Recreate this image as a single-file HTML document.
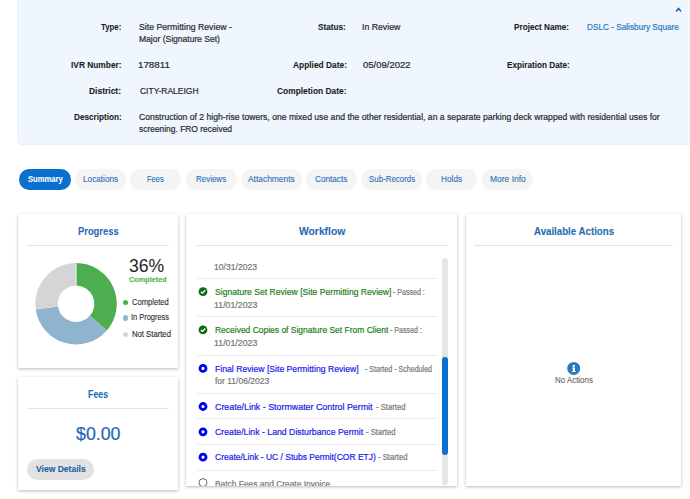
<!DOCTYPE html>
<html><head><meta charset="utf-8"><style>
html,body{margin:0;padding:0;width:690px;height:499px;overflow:hidden;background:#fff;font-family:"Liberation Sans",sans-serif}
.t{position:absolute;white-space:nowrap;transform-origin:0 0;font-family:"Liberation Sans",sans-serif}
.card{position:absolute;background:#fff;box-shadow:0 1px 3px rgba(0,0,0,0.28)}
</style></head><body>
<div style="position:absolute;left:18.4px;top:-6px;width:680px;height:150.3px;border-radius:2px;background:#eff6fe;box-shadow:0 0 0 0.6px #e2ebf5, 0 0.5px 1.5px rgba(0,0,0,0.05)"></div>
<svg style="position:absolute;left:672px;top:0px" width="14" height="16"><path d="M4.4 11 L6.6 8.4 L8.7 11" fill="none" stroke="#1560c0" stroke-width="1.5" stroke-linecap="round" stroke-linejoin="round"/></svg>
<span class="t" style="left:101.00px;top:22.83px;font-size:9.3px;line-height:9.3px;font-weight:700;color:#1c1c1c;transform:scaleX(0.8417);-webkit-text-stroke:0.09px #1c1c1c">Type:</span>
<span class="t" style="left:139.00px;top:21.87px;font-size:9.6px;line-height:9.6px;font-weight:400;color:#2a2a2a;transform:scaleX(0.9069);-webkit-text-stroke:0.22px #2a2a2a">Site Permitting Review -</span>
<span class="t" style="left:139.00px;top:34.27px;font-size:9.6px;line-height:9.6px;font-weight:400;color:#2a2a2a;transform:scaleX(0.8879);-webkit-text-stroke:0.22px #2a2a2a">Major (Signature Set)</span>
<span class="t" style="left:318.30px;top:22.83px;font-size:9.3px;line-height:9.3px;font-weight:700;color:#1c1c1c;transform:scaleX(0.8806);-webkit-text-stroke:0.09px #1c1c1c">Status:</span>
<span class="t" style="left:362.29px;top:21.87px;font-size:9.6px;line-height:9.6px;font-weight:400;color:#2a2a2a;transform:scaleX(0.9098);-webkit-text-stroke:0.22px #2a2a2a">In Review</span>
<span class="t" style="left:514.30px;top:22.83px;font-size:9.3px;line-height:9.3px;font-weight:700;color:#1c1c1c;transform:scaleX(0.8806);-webkit-text-stroke:0.09px #1c1c1c">Project Name:</span>
<span class="t" style="left:587.30px;top:21.87px;font-size:9.6px;line-height:9.6px;font-weight:400;color:#2c7bbd;transform:scaleX(0.8570);-webkit-text-stroke:0.22px #2c7bbd">DSLC - Salisbury Square</span>
<span class="t" style="left:70.90px;top:60.93px;font-size:9.3px;line-height:9.3px;font-weight:700;color:#1c1c1c;transform:scaleX(0.8982);-webkit-text-stroke:0.09px #1c1c1c">IVR Number:</span>
<span class="t" style="left:138.48px;top:59.97px;font-size:9.6px;line-height:9.6px;font-weight:400;color:#2a2a2a;transform:scaleX(1.0167);-webkit-text-stroke:0.22px #2a2a2a">178811</span>
<span class="t" style="left:292.50px;top:60.93px;font-size:9.3px;line-height:9.3px;font-weight:700;color:#1c1c1c;transform:scaleX(0.9000);-webkit-text-stroke:0.09px #1c1c1c">Applied Date:</span>
<span class="t" style="left:362.80px;top:59.97px;font-size:9.6px;line-height:9.6px;font-weight:400;color:#2a2a2a;transform:scaleX(0.9896);-webkit-text-stroke:0.22px #2a2a2a">05/09/2022</span>
<span class="t" style="left:506.50px;top:60.93px;font-size:9.3px;line-height:9.3px;font-weight:700;color:#1c1c1c;transform:scaleX(0.8803);-webkit-text-stroke:0.09px #1c1c1c">Expiration Date:</span>
<span class="t" style="left:89.30px;top:86.83px;font-size:9.3px;line-height:9.3px;font-weight:700;color:#1c1c1c;transform:scaleX(0.9114);-webkit-text-stroke:0.09px #1c1c1c">District:</span>
<span class="t" style="left:139.50px;top:85.87px;font-size:9.6px;line-height:9.6px;font-weight:400;color:#2a2a2a;transform:scaleX(0.8833);-webkit-text-stroke:0.22px #2a2a2a">CITY-RALEIGH</span>
<span class="t" style="left:277.00px;top:86.83px;font-size:9.3px;line-height:9.3px;font-weight:700;color:#1c1c1c;transform:scaleX(0.9026);-webkit-text-stroke:0.09px #1c1c1c">Completion Date:</span>
<span class="t" style="left:73.70px;top:112.63px;font-size:9.3px;line-height:9.3px;font-weight:700;color:#1c1c1c;transform:scaleX(0.8796);-webkit-text-stroke:0.09px #1c1c1c">Description:</span>
<span class="t" style="left:139.00px;top:111.67px;font-size:9.6px;line-height:9.6px;font-weight:400;color:#2a2a2a;transform:scaleX(0.8983);-webkit-text-stroke:0.22px #2a2a2a">Construction of 2 high-rise towers, one mixed use and the other residential, an a separate parking deck wrapped with residential uses for</span>
<span class="t" style="left:139.00px;top:124.07px;font-size:9.6px;line-height:9.6px;font-weight:400;color:#2a2a2a;transform:scaleX(0.8764);-webkit-text-stroke:0.22px #2a2a2a">screening. FRO received</span>
<div style="position:absolute;left:19.3px;top:169.2px;width:51.4px;height:20.4px;border-radius:10.2px;background:#0a6fcd"></div>
<div style="position:absolute;left:75.0px;top:169.2px;width:50.8px;height:20.4px;border-radius:10.2px;background:#f4f4f5"></div>
<div style="position:absolute;left:130.4px;top:169.2px;width:50.9px;height:20.4px;border-radius:10.2px;background:#f4f4f5"></div>
<div style="position:absolute;left:185.7px;top:169.2px;width:50.9px;height:20.4px;border-radius:10.2px;background:#f4f4f5"></div>
<div style="position:absolute;left:241.3px;top:169.2px;width:60.4px;height:20.4px;border-radius:10.2px;background:#f4f4f5"></div>
<div style="position:absolute;left:306.4px;top:169.2px;width:50.9px;height:20.4px;border-radius:10.2px;background:#f4f4f5"></div>
<div style="position:absolute;left:361.2px;top:169.2px;width:60.5px;height:20.4px;border-radius:10.2px;background:#f4f4f5"></div>
<div style="position:absolute;left:426.1px;top:169.2px;width:51.1px;height:20.4px;border-radius:10.2px;background:#f4f4f5"></div>
<div style="position:absolute;left:481.9px;top:169.2px;width:50.7px;height:20.4px;border-radius:10.2px;background:#f4f4f5"></div>
<span class="t" style="left:27.50px;top:175.23px;font-size:9.3px;line-height:9.3px;font-weight:700;color:#ffffff;transform:scaleX(0.8209);-webkit-text-stroke:0.09px #ffffff">Summary</span>
<span class="t" style="left:82.80px;top:175.23px;font-size:9.3px;line-height:9.3px;font-weight:400;color:#2b6fb6;transform:scaleX(0.8825);-webkit-text-stroke:0.11px #2b6fb6">Locations</span>
<span class="t" style="left:147.40px;top:175.23px;font-size:9.3px;line-height:9.3px;font-weight:400;color:#2b6fb6;transform:scaleX(0.8095);-webkit-text-stroke:0.11px #2b6fb6">Fees</span>
<span class="t" style="left:196.20px;top:175.23px;font-size:9.3px;line-height:9.3px;font-weight:400;color:#2b6fb6;transform:scaleX(0.8571);-webkit-text-stroke:0.11px #2b6fb6">Reviews</span>
<span class="t" style="left:247.80px;top:175.23px;font-size:9.3px;line-height:9.3px;font-weight:400;color:#2b6fb6;transform:scaleX(0.9038);-webkit-text-stroke:0.11px #2b6fb6">Attachments</span>
<span class="t" style="left:315.30px;top:175.23px;font-size:9.3px;line-height:9.3px;font-weight:400;color:#2b6fb6;transform:scaleX(0.8811);-webkit-text-stroke:0.11px #2b6fb6">Contacts</span>
<span class="t" style="left:368.80px;top:175.23px;font-size:9.3px;line-height:9.3px;font-weight:400;color:#2b6fb6;transform:scaleX(0.8500);-webkit-text-stroke:0.11px #2b6fb6">Sub-Records</span>
<span class="t" style="left:441.30px;top:175.23px;font-size:9.3px;line-height:9.3px;font-weight:400;color:#2b6fb6;transform:scaleX(0.8875);-webkit-text-stroke:0.11px #2b6fb6">Holds</span>
<span class="t" style="left:489.60px;top:175.23px;font-size:9.3px;line-height:9.3px;font-weight:400;color:#2b6fb6;transform:scaleX(0.9103);-webkit-text-stroke:0.11px #2b6fb6">More Info</span>
<div class="card" style="left:18px;top:214px;width:160px;height:154px"></div>
<div class="card" style="left:18px;top:377px;width:160px;height:113px"></div>
<div class="card" style="left:185.5px;top:214px;width:271.5px;height:271.5px"></div>
<div class="card" style="left:465.5px;top:214px;width:215.5px;height:271.5px"></div>
<div style="position:absolute;left:27px;top:245.2px;width:141.5px;height:1px;background:#e3e3e3"></div>
<div style="position:absolute;left:195.8px;top:245.2px;width:252.0px;height:1px;background:#e3e3e3"></div>
<div style="position:absolute;left:474px;top:245.2px;width:199.29999999999995px;height:1px;background:#e3e3e3"></div>
<div style="position:absolute;left:27px;top:407.8px;width:141.5px;height:1px;background:#e3e3e3"></div>
<span class="t" style="left:77.60px;top:226.03px;font-size:11.3px;line-height:11.3px;font-weight:700;color:#1f6cb3;transform:scaleX(0.8286);-webkit-text-stroke:0.09px #1f6cb3">Progress</span>
<span class="t" style="left:298.60px;top:226.03px;font-size:11.3px;line-height:11.3px;font-weight:700;color:#1f6cb3;transform:scaleX(0.9137);-webkit-text-stroke:0.09px #1f6cb3">Workflow</span>
<span class="t" style="left:534.00px;top:226.03px;font-size:11.3px;line-height:11.3px;font-weight:700;color:#1f6cb3;transform:scaleX(0.8581);-webkit-text-stroke:0.09px #1f6cb3">Available Actions</span>
<span class="t" style="left:87.70px;top:389.03px;font-size:11.3px;line-height:11.3px;font-weight:700;color:#1f6cb3;transform:scaleX(0.7846);-webkit-text-stroke:0.09px #1f6cb3">Fees</span>
<svg style="position:absolute;left:0;top:0" width="180" height="360"><path d="M76.10 263.10 A40.7 40.7 0 0 1 106.86 330.45 L89.93 315.78 A18.3 18.3 0 0 0 76.10 285.50 Z" fill="#4cae4f"/><path d="M106.86 330.45 A40.7 40.7 0 0 1 35.81 309.59 L57.99 306.40 A18.3 18.3 0 0 0 89.93 315.78 Z" fill="#8fb4d0"/><path d="M35.81 309.59 A40.7 40.7 0 0 1 76.10 263.10 L76.10 285.50 A18.3 18.3 0 0 0 57.99 306.40 Z" fill="#d5d5d5"/><line x1="76.1" y1="262.6" x2="76.1" y2="286.0" stroke="#fff" stroke-width="0.7"/></svg>
<span class="t" style="left:128.92px;top:257.36px;font-size:18px;line-height:18px;font-weight:400;color:#262626;transform:scaleX(0.9800)">36%</span>
<span class="t" style="left:128.70px;top:276.07px;font-size:7.6px;line-height:7.6px;font-weight:700;color:#4caf50;transform:scaleX(0.9590);-webkit-text-stroke:0.09px #4caf50">Completed</span>
<span class="t" style="left:131.80px;top:297.55px;font-size:8.8px;line-height:8.8px;font-weight:400;color:#2a2a2a;transform:scaleX(0.8619);-webkit-text-stroke:0.11px #2a2a2a">Completed</span>
<span class="t" style="left:130.95px;top:313.35px;font-size:8.8px;line-height:8.8px;font-weight:400;color:#2a2a2a;transform:scaleX(0.8455);-webkit-text-stroke:0.11px #2a2a2a">In Progress</span>
<span class="t" style="left:131.80px;top:329.65px;font-size:8.8px;line-height:8.8px;font-weight:400;color:#2a2a2a;transform:scaleX(0.8750);-webkit-text-stroke:0.11px #2a2a2a">Not Started</span>
<div style="position:absolute;left:122.9px;top:299.8px;width:5.2px;height:5.2px;border-radius:50%;background:#4cae4f"></div>
<div style="position:absolute;left:122.9px;top:315.4px;width:5.2px;height:5.2px;border-radius:50%;background:#8fb4d0"></div>
<div style="position:absolute;left:122.9px;top:331.7px;width:5.2px;height:5.2px;border-radius:50%;background:#d5d5d5"></div>
<span class="t" style="left:75.70px;top:424.89px;font-size:18.8px;line-height:18.8px;font-weight:400;color:#1d69b4;transform:scaleX(0.9468);-webkit-text-stroke:0.22px #1d69b4">$0.00</span>
<div style="position:absolute;left:27px;top:458.8px;width:66.7px;height:21.4px;border-radius:10.7px;background:#e2e2e2"></div>
<span class="t" style="left:35.80px;top:464.51px;font-size:9.2px;line-height:9.2px;font-weight:700;color:#1a5ea8;transform:scaleX(0.9283);-webkit-text-stroke:0.09px #1a5ea8">View Details</span>
<svg style="position:absolute;left:560px;top:355px" width="28" height="28"><circle cx="13.7" cy="13.4" r="6.5" fill="#2a78c0"/><circle cx="13.8" cy="11.0" r="1.15" fill="#fff"/><path d="M12.3 12.6 H14.9 V15.9 H15.7 V16.9 H12.0 V15.9 H12.8 V13.5 H12.3 Z" fill="#fff"/></svg>
<span class="t" style="left:555.00px;top:375.52px;font-size:8.6px;line-height:8.6px;font-weight:400;color:#666666;transform:scaleX(0.9220);-webkit-text-stroke:0.11px #666666">No Actions</span>
<div style="position:absolute;left:186px;top:250px;width:256px;height:235.5px;overflow:hidden"><div style="position:absolute;left:9.8px;top:27.9px;width:241.2px;height:1px;background:#ececec"></div><div style="position:absolute;left:9.8px;top:65.8px;width:241.2px;height:1px;background:#ececec"></div><div style="position:absolute;left:9.8px;top:104.5px;width:241.2px;height:1px;background:#ececec"></div><div style="position:absolute;left:9.8px;top:142.7px;width:241.2px;height:1px;background:#ececec"></div><div style="position:absolute;left:9.8px;top:168.1px;width:241.2px;height:1px;background:#ececec"></div><div style="position:absolute;left:9.8px;top:193.9px;width:241.2px;height:1px;background:#ececec"></div><div style="position:absolute;left:9.8px;top:219.9px;width:241.2px;height:1px;background:#ececec"></div><span class="t" style="left:27.80px;top:12.07px;font-size:9.6px;line-height:9.6px;font-weight:400;color:#777777;transform:scaleX(0.8979);-webkit-text-stroke:0.22px #777777">10/31/2023</span><span class="t" style="left:28.50px;top:36.87px;font-size:9.6px;line-height:9.6px;font-weight:400;color:#1f7f24;transform:scaleX(0.8969);-webkit-text-stroke:0.22px #1f7f24">Signature Set Review [Site Permitting Review]</span><span class="t" style="left:206.90px;top:37.89px;font-size:8.4px;line-height:8.4px;font-weight:400;color:#7a7a7a;transform:scaleX(0.8432);-webkit-text-stroke:0.22px #7a7a7a">- Passed :</span><span class="t" style="left:27.78px;top:49.97px;font-size:9.6px;line-height:9.6px;font-weight:400;color:#777777;transform:scaleX(0.9174);-webkit-text-stroke:0.22px #777777">11/01/2023</span><span class="t" style="left:28.50px;top:75.17px;font-size:9.6px;line-height:9.6px;font-weight:400;color:#1f7f24;transform:scaleX(0.8832);-webkit-text-stroke:0.22px #1f7f24">Received Copies of Signature Set From Client</span><span class="t" style="left:204.30px;top:76.19px;font-size:8.4px;line-height:8.4px;font-weight:400;color:#7a7a7a;transform:scaleX(0.8486);-webkit-text-stroke:0.22px #7a7a7a">- Passed :</span><span class="t" style="left:27.78px;top:88.07px;font-size:9.6px;line-height:9.6px;font-weight:400;color:#777777;transform:scaleX(0.9174);-webkit-text-stroke:0.22px #777777">11/01/2023</span><span class="t" style="left:28.50px;top:113.57px;font-size:9.6px;line-height:9.6px;font-weight:400;color:#2121e6;transform:scaleX(0.9013);-webkit-text-stroke:0.22px #2121e6">Final Review [Site Permitting Review]</span><span class="t" style="left:178.90px;top:114.59px;font-size:8.4px;line-height:8.4px;font-weight:400;color:#7a7a7a;transform:scaleX(0.8468);-webkit-text-stroke:0.22px #7a7a7a">- Started - Scheduled</span><span class="t" style="left:28.70px;top:125.97px;font-size:9.6px;line-height:9.6px;font-weight:400;color:#777777;transform:scaleX(0.8852);-webkit-text-stroke:0.22px #777777">for 11/06/2023</span><span class="t" style="left:28.50px;top:151.67px;font-size:9.6px;line-height:9.6px;font-weight:400;color:#2121e6;transform:scaleX(0.9234);-webkit-text-stroke:0.22px #2121e6">Create/Link - Stormwater Control Permit</span><span class="t" style="left:189.50px;top:152.69px;font-size:8.4px;line-height:8.4px;font-weight:400;color:#7a7a7a;transform:scaleX(0.9187);-webkit-text-stroke:0.22px #7a7a7a">- Started</span><span class="t" style="left:28.50px;top:177.07px;font-size:9.6px;line-height:9.6px;font-weight:400;color:#2121e6;transform:scaleX(0.9080);-webkit-text-stroke:0.22px #2121e6">Create/Link - Land Disturbance Permit</span><span class="t" style="left:179.60px;top:178.09px;font-size:8.4px;line-height:8.4px;font-weight:400;color:#7a7a7a;transform:scaleX(0.9156);-webkit-text-stroke:0.22px #7a7a7a">- Started</span><span class="t" style="left:28.50px;top:202.47px;font-size:9.6px;line-height:9.6px;font-weight:400;color:#2121e6;transform:scaleX(0.8845);-webkit-text-stroke:0.22px #2121e6">Create/Link - UC / Stubs Permit(COR ETJ)</span><span class="t" style="left:191.60px;top:203.49px;font-size:8.4px;line-height:8.4px;font-weight:400;color:#7a7a7a;transform:scaleX(0.9156);-webkit-text-stroke:0.22px #7a7a7a">- Started</span><span class="t" style="left:28.50px;top:228.87px;font-size:9.6px;line-height:9.6px;font-weight:400;color:#777777;transform:scaleX(0.8750);-webkit-text-stroke:0.22px #777777">Batch Fees and Create Invoice</span><svg style="position:absolute;left:0;top:0" width="256" height="235.5"><circle cx="17" cy="41.69999999999999" r="4.4" fill="#0a6e14"/><path d="M14.9 41.79999999999999 L16.4 43.19999999999999 L19.2 40.29999999999999" fill="none" stroke="#fff" stroke-width="1.3"/><circle cx="17" cy="79.89999999999998" r="4.4" fill="#0a6e14"/><path d="M14.9 79.99999999999997 L16.4 81.39999999999998 L19.2 78.49999999999997" fill="none" stroke="#fff" stroke-width="1.3"/><circle cx="17" cy="118.39999999999998" r="3.0" fill="none" stroke="#0000f0" stroke-width="2.8"/><circle cx="17" cy="156.5" r="3.0" fill="none" stroke="#0000f0" stroke-width="2.8"/><circle cx="17" cy="181.8" r="3.0" fill="none" stroke="#0000f0" stroke-width="2.8"/><circle cx="17" cy="207.2" r="3.0" fill="none" stroke="#0000f0" stroke-width="2.8"/><circle cx="17" cy="232.60000000000002" r="4" fill="none" stroke="#666" stroke-width="1"/></svg></div>
<div style="position:absolute;left:442px;top:258.3px;width:6px;height:227px;border-radius:3px;background:#e6e6e6"></div>
<div style="position:absolute;left:442px;top:356.8px;width:6px;height:98px;border-radius:3px;background:#0a6fcd"></div>
</body></html>
